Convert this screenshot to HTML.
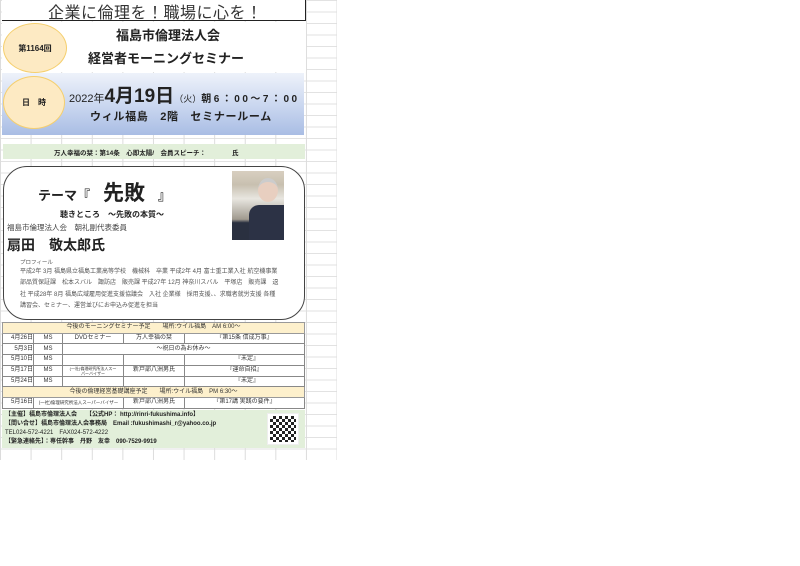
<!DOCTYPE html>
<html><head><meta charset="utf-8"><style>
*{margin:0;padding:0;box-sizing:border-box}
body{width:800px;height:566px;background:#fff;position:relative;overflow:hidden;font-family:"Liberation Sans","Noto Sans CJK JP",sans-serif;color:#222}
.grid{position:absolute;left:0;top:0;width:337px;height:460px;
background-image:linear-gradient(to right,#dcdcdc 1px,transparent 1px),linear-gradient(to bottom,#e2e2e2 1px,transparent 1px);
background-size:30.6px 100%,100% 11.5px}
.a{position:absolute}
.t{position:absolute;white-space:nowrap}
.ell{position:absolute;border-radius:50%;background:#fdeac3;border:1px solid #f5cf6e;display:flex;align-items:center;justify-content:center;font-size:8px;font-weight:bold}
table{position:absolute;left:2px;top:322px;width:303px;border-collapse:collapse;font-size:6px;background:#fff}
td{border:1px solid #888;height:10.7px;line-height:9px;text-align:center;padding:0;white-space:nowrap;overflow:hidden;color:#333}
.h td{background:#fdf0cc;border-color:#999}
</style></head><body>
<div class="grid"></div>
<div class="a" style="left:2px;top:0;width:304px;height:21px;background:#fff;border:1px solid #222;border-top:none;border-left:none"></div>
<div class="t" style="left:48px;top:-1px;font-size:16px;color:#333;letter-spacing:0.5px">企業に倫理を！職場に心を！</div>
<div class="a" style="left:2px;top:22px;width:304px;height:50px;background:#fff"></div>
<div class="ell" style="left:3px;top:23px;width:64px;height:50px">第1164回</div>
<div class="t" style="left:116px;top:25px;font-size:13px;font-weight:bold">福島市倫理法人会</div>
<div class="t" style="left:88px;top:48px;font-size:13px;font-weight:bold">経営者モーニングセミナー</div>
<div class="a" style="left:2px;top:73px;width:302px;height:62px;background:linear-gradient(#eef2fa,#c5d3ee 60%,#a9bde4)"></div>
<div class="ell" style="left:3px;top:76px;width:62px;height:53px">日　時</div>
<div class="t" style="left:69px;top:81px;font-size:11px">2022年<b style="font-size:19px">4月19日</b><span style="font-size:9px">（火）</span><b style="font-size:10px;letter-spacing:2.5px">朝6：00～7：00</b></div>
<div class="t" style="left:90px;top:108px;font-size:11px;font-weight:bold;letter-spacing:0.7px">ウィル福島　2階　セミナールーム</div>
<div class="a" style="left:3px;top:144px;width:302px;height:15px;background:#e2efda"></div>
<div class="t" style="left:54px;top:147px;font-size:6.5px;font-weight:bold">万人幸福の栞：第14条　心即太陽/　会員スピーチ：　　　　氏</div>
<div class="a" style="left:3px;top:166px;width:302px;height:154px;border:1px solid #444;border-radius:24px;background:#fff"></div>
<div class="t" style="left:38px;top:177px;font-size:13px;font-weight:bold">テーマ『　<span style="font-size:21px">先敗</span>　』</div>
<div class="t" style="left:60px;top:209px;font-size:8px;font-weight:bold">聴きところ　～先敗の本質～</div>
<div class="t" style="left:7px;top:222px;font-size:7.5px;color:#444">福島市倫理法人会　朝礼副代表委員</div>
<div class="t" style="left:7px;top:235px;font-size:14px;font-weight:bold">扇田　敬太郎氏</div>
<div class="a" style="left:232px;top:171px;width:52px;height:69px;background:linear-gradient(#d8cfc0 0,#c8c0b0 20%,#e8e6e0 40%,#a09a8f 70%,#2a3040 75%,#2a3040)"></div>
<div class="a" style="left:258px;top:178px;width:20px;height:24px;border-radius:50%;background:#e8cfc0;border-top:4px solid #ccc"></div>
<div class="a" style="left:249px;top:205px;width:35px;height:35px;background:#2c3245;border-radius:10px 0 0 0"></div>
<div class="t" style="left:20px;top:258px;font-size:5.5px;color:#555">プロフィール</div>
<div class="a" style="left:20px;top:267px;width:285px;font-size:6px;line-height:11.3px;color:#555;white-space:nowrap">平成2年 3月 福島県立福島工業高等学校　機械科　卒業 平成2年 4月 富士重工業入社 航空機事業<br>部品質保証課　松本スバル　諏訪店　販売課 平成27年 12月 神奈川スバル　平塚店　販売課　退<br>社 平成28年 8月 福島広域雇用促進支援協議会　入社 企業様　採用支援、、求職者就労支援 各種<br>講習会、セミナー、運営並びにお申込み促進を担当</div>
<table>
<colgroup><col style="width:31px"><col style="width:29px"><col style="width:61px"><col style="width:61px"><col></colgroup>
<tr class="h"><td colspan="5">今後のモーニングセミナー予定　　場所:ウイル福島　AM 6:00～</td></tr>
<tr><td style="text-align:right">4月26日</td><td>MS</td><td>DVDセミナー</td><td>万人幸福の栞</td><td>『第15条 信成万事』</td></tr>
<tr><td style="text-align:right">5月3日</td><td>MS</td><td colspan="3">～祝日の為お休み～</td></tr>
<tr><td style="text-align:right">5月10日</td><td>MS</td><td></td><td></td><td style="text-align:right;padding-right:45px">『未定』</td></tr>
<tr><td style="text-align:right">5月17日</td><td>MS</td><td style="font-size:4px;line-height:5px">(一社)倫理研究所法人スー<br>パーバイザー</td><td>新戸部八洲男氏</td><td>『運命自招』</td></tr>
<tr><td style="text-align:right">5月24日</td><td>MS</td><td></td><td></td><td style="text-align:right;padding-right:45px">『未定』</td></tr>
<tr class="h"><td colspan="5">今後の倫理経営基礎講座予定　　場所:ウイル福島　PM 6:30～</td></tr>
<tr><td style="text-align:right">5月16日</td><td colspan="2" style="font-size:4.5px">(一社)倫理研究所法人スーパーバイザー</td><td>新戸部八洲男氏</td><td>『第17講 実践の要件』</td></tr>
</table>
<div class="a" style="left:2px;top:410px;width:303px;height:38px;background:#e2efda"></div>
<div class="a" style="left:5px;top:411px;font-size:6px;line-height:9px;font-weight:bold;color:#222;white-space:nowrap">【主催】福島市倫理法人会　　【公式HP： http://rinri-fukushima.info】<br>【問い合せ】福島市倫理法人会事務局　Email :fukushimashi_r@yahoo.co.jp<br><span style="font-weight:normal">TEL024-572-4221　FAX024-572-4222</span><br>【緊急連絡先】：専任幹事　丹野　友幸　090-7529-9919</div>
<div class="a" style="left:268px;top:414px;width:30px;height:30px;background:repeating-conic-gradient(#222 0 25%,#fff 0 50%) 0 0/6px 6px;border:2px solid #fff;outline:1px solid #eee"></div>
</body></html>
